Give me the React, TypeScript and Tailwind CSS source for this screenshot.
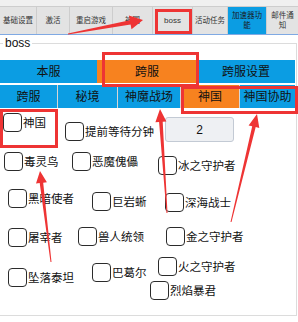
import React from "react";

type Pt = [number, number];

function arrowPoints(t: Pt, p: Pt, headLen: number, headHalf: number, tailHalf: number, neckHalf: number) {
  const dx = p[0] - t[0];
  const dy = p[1] - t[1];
  const len = Math.hypot(dx, dy);
  const ux = dx / len;
  const uy = dy / len;
  const nx = -uy;
  const ny = ux;
  const bx = p[0] - ux * headLen;
  const by = p[1] - uy * headLen;
  const pts: Pt[] = [
    [t[0] + nx * tailHalf, t[1] + ny * tailHalf],
    [bx + nx * neckHalf, by + ny * neckHalf],
    [bx + nx * headHalf, by + ny * headHalf],
    [p[0], p[1]],
    [bx - nx * headHalf, by - ny * headHalf],
    [bx - nx * neckHalf, by - ny * neckHalf],
    [t[0] - nx * tailHalf, t[1] - ny * tailHalf],
  ];
  return pts.map((q) => `${q[0].toFixed(1)},${q[1].toFixed(1)}`).join(" ");
}

function Check({ label }: { label: string }) {
  return (
    <div className="flex items-center whitespace-nowrap">
      <div className="h-[19px] w-[19px] shrink-0 rounded-[4px] border-[1.5px] border-[#2b2b2b] bg-white" />
      <span className="ml-[1px] text-[11.5px] leading-[14px] text-[#111]">{label}</span>
    </div>
  );
}

export default function App() {
  const red = "#ee3434";
  return (
    <div className="relative h-[322px] w-[298px] overflow-hidden bg-white font-['Liberation_Sans','Noto_Sans_CJK_SC',sans-serif] text-[#111]">
      {/* top tab bar */}
      <div className="flex h-[35px] border-b border-[#7fa9e3] bg-[#f0f0f0] pt-[6px] text-[7.5px] leading-[10px] text-[#333]">
        <div className="flex w-[37px] items-center justify-center border-r border-t border-[#cdcdcd] bg-[#e3e3e3]">基础设置</div>
        <div className="flex w-[33px] items-center justify-center border-r border-t border-[#cdcdcd] bg-[#e3e3e3]">激活</div>
        <div className="flex w-[43px] items-center justify-center border-r border-t border-[#cdcdcd] bg-[#e3e3e3]">重启游戏</div>
        <div className="flex w-[40px] items-center justify-center border-r border-t border-[#cdcdcd] bg-[#e3e3e3]">神国</div>
        <div className="flex w-[40px] items-center justify-center border-r border-t border-[#cdcdcd] bg-[#e3e3e3] text-[8px]">boss</div>
        <div className="flex w-[35px] items-center justify-center border-r border-t border-[#cdcdcd] bg-[#e3e3e3]">活动任务</div>
        <div className="flex w-[39px] flex-col items-center justify-center border-r border-t border-[#cdcdcd] bg-[#0b9de3] text-center text-[#1a1a1a]">
          <span>加速器功</span>
          <span>能</span>
        </div>
        <div className="flex w-[31px] flex-col items-center justify-center border-t border-[#cdcdcd] bg-[#e3e3e3] text-center">
          <span>邮件通</span>
          <span>知</span>
        </div>
      </div>

      {/* group box */}
      <div className="relative mt-[8px] h-[273px] w-[297px] border-b border-r border-t border-[#dcdcdc]">
        <div className="absolute -top-[8px] left-[3px] bg-white px-[2px] text-[12px] leading-[14px] text-[#111]">boss</div>

        <div className="mt-[16px] flex h-[23px] w-[295px] text-[12px] leading-[14px] text-[#111]">
          <div className="flex w-[97px] items-center justify-center bg-[#0b9de3]">本服</div>
          <div className="flex w-[100px] items-center justify-center bg-[#f7821f]">跨服</div>
          <div className="flex w-[98px] items-center justify-center bg-[#0b9de3]">跨服设置</div>
        </div>
        <div className="mt-[2px] flex h-[23px] w-[295px] text-[12px] leading-[14px] text-[#111]">
          <div className="flex w-[58px] items-center justify-center border-r border-[#d6d6d6] bg-[#0b9de3]">跨服</div>
          <div className="flex w-[60px] items-center justify-center border-r border-[#d6d6d6] bg-[#0b9de3]">秘境</div>
          <div className="flex w-[63px] items-center justify-center border-r border-[#d6d6d6] bg-[#0b9de3]">神魔战场</div>
          <div className="flex w-[59px] items-center justify-center border-r border-[#d6d6d6] bg-[#f7821f]">神国</div>
          <div className="flex w-[55px] items-center justify-center bg-[#0b9de3]">神国协助</div>
        </div>

        {/* row A */}
        <div className="flex h-[42px] items-start">
          <div className="ml-[3px] mt-[5px] w-[62px]"><Check label="神国" /></div>
          <div className="mt-[14px] w-[100px]"><Check label="提前等待分钟" /></div>
          <div className="mt-[9px] flex h-[25px] w-[69px] items-center justify-center rounded-[3px] border border-[#c3cad4] bg-[#eef0f3] text-[12px]">2</div>
        </div>
        {/* row B */}
        <div className="flex h-[36px] items-start">
          <div className="ml-[4px] mt-[2px] w-[68px]"><Check label="毒灵鸟" /></div>
          <div className="mt-[2px] w-[86px]"><Check label="恶魔傀儡" /></div>
          <div className="mt-[6px]"><Check label="冰之守护者" /></div>
        </div>
        {/* row C */}
        <div className="flex h-[38px] items-start">
          <div className="ml-[8px] mt-[3px] w-[84px]"><Check label="黑暗使者" /></div>
          <div className="mt-[6px] w-[73px]"><Check label="巨岩蜥" /></div>
          <div className="mt-[7px]"><Check label="深海战士" /></div>
        </div>
        {/* row D */}
        <div className="flex h-[30px] items-start">
          <div className="ml-[8px] mt-[4px] w-[70px]"><Check label="屠宰者" /></div>
          <div className="mt-[3px] w-[88px]"><Check label="兽人统领" /></div>
          <div className="mt-[3px]"><Check label="金之守护者" /></div>
        </div>
        {/* row E */}
        <div className="flex items-start">
          <div className="ml-[8px] mt-[14px] w-[84px]"><Check label="坠落泰坦" /></div>
          <div className="mt-[9px] w-[58px]"><Check label="巴葛尔" /></div>
          <div className="mt-[3px] flex flex-col gap-[5px]">
            <div className="ml-[8px]"><Check label="火之守护者" /></div>
            <div><Check label="烈焰暴君" /></div>
          </div>
        </div>
      </div>

      {/* red annotations */}
      <svg className="pointer-events-none absolute left-0 top-0" width="298" height="322" viewBox="0 0 298 322">
        <g fill="none" stroke={red} strokeWidth="3">
          <rect x="156.5" y="10.5" width="34" height="22" />
          <rect x="103.5" y="53.5" width="94" height="32" />
          <rect x="182.5" y="87.5" width="114" height="25" />
          <rect x="1.5" y="110.5" width="55" height="36" />
        </g>
        <g fill={red}>
          <polygon points={arrowPoints([68, 34], [143, 20], 13, 7, 0.6, 2.2)} />
          <polygon points={arrowPoints([51, 262], [40, 171], 12, 5.5, 0.5, 1.8)} />
          <polygon points={arrowPoints([167, 213], [160, 109], 13, 5.5, 0.5, 1.8)} />
          <polygon points={arrowPoints([231, 222], [257, 114], 13, 5.5, 0.5, 1.8)} />
        </g>
      </svg>
    </div>
  );
}
